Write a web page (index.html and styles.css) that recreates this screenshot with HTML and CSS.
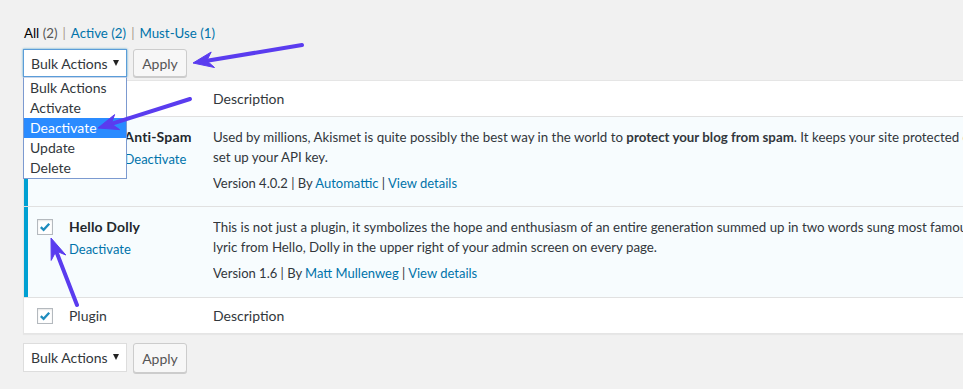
FILE: index.html
```html
<!DOCTYPE html>
<html lang="en">
<head>
<meta charset="utf-8">
<title>Plugins</title>
<link rel="stylesheet" href="styles.css">
</head>
<body>
<div class="page">
  <ul class="subsubsub">
    <li class="current">All <span class="count">(2)</span></li>
    <li class="sep">|</li>
    <li><a href="#">Active <span class="count">(2)</span></a></li>
    <li class="sep">|</li>
    <li><a href="#">Must-Use <span class="count">(1)</span></a></li>
  </ul>

  <div class="tablenav top">
    <div class="select-wrap">
      <div class="select focused"><span>Bulk Actions</span><i class="caret"></i></div>
      <ul class="dropdown">
        <li>Bulk Actions</li>
        <li>Activate</li>
        <li class="hl">Deactivate</li>
        <li>Update</li>
        <li>Delete</li>
      </ul>
    </div>
    <div class="button">Apply</div>
  </div>

  <div class="plugins">
    <div class="row head">
      <div class="cell check"><span class="cb"></span></div>
      <div class="cell name">Plugin</div>
      <div class="cell desc">Description</div>
    </div>

    <div class="row item active">
      <div class="cell check"><span class="cb on"><svg viewBox="0 0 16 16"><path d="M3.2 8.2 L6.4 11.3 L12.8 4.3"/></svg></span></div>
      <div class="cell name">
        <strong class="title">Akismet Anti-Spam</strong>
        <div class="actions"><a href="#">Settings</a> | <a href="#">Deactivate</a></div>
      </div>
      <div class="cell desc">
        <p class="text">Used by millions, Akismet is quite possibly the best way in the world to <strong>protect your blog from spam</strong>. It keeps your site protected even while you sleep. To get started: activate the Akismet plugin and then go to your Akismet Settings page to<br>set up your API key.</p>
        <p class="meta">Version 4.0.2 | By <a href="#">Automattic</a> | <a href="#">View details</a></p>
      </div>
    </div>

    <div class="row item active second">
      <div class="cell check"><span class="cb on"><svg viewBox="0 0 16 16"><path d="M3.2 8.2 L6.4 11.3 L12.8 4.3"/></svg></span></div>
      <div class="cell name">
        <strong class="title">Hello Dolly</strong>
        <div class="actions"><a href="#">Deactivate</a></div>
      </div>
      <div class="cell desc">
        <p class="text">This is not just a plugin, it symbolizes the hope and enthusiasm of an entire generation summed up in two words sung most famously by Louis Armstrong: Hello, Dolly. When activated you will randomly see a<br>lyric from Hello, Dolly in the upper right of your admin screen on every page.</p>
        <p class="meta">Version 1.6 | By <a href="#">Matt Mullenweg</a> | <a href="#">View details</a></p>
      </div>
    </div>

    <div class="row foot">
      <div class="cell check"><span class="cb on"><svg viewBox="0 0 16 16"><path d="M3.2 8.2 L6.4 11.3 L12.8 4.3"/></svg></span></div>
      <div class="cell name">Plugin</div>
      <div class="cell desc">Description</div>
    </div>
  </div>

  <div class="tablenav bottom">
    <div class="select-wrap">
      <div class="select"><span>Bulk Actions</span><i class="caret"></i></div>
    </div>
    <div class="button">Apply</div>
  </div>

  <svg class="arrows" viewBox="0 0 963 389" width="963" height="389">
    <g class="arrow">
      <line x1="302" y1="45" x2="207" y2="60.7"/>
      <polygon points="193,63 214.5,67.5 206.8,60.7 211.2,52"/>
    </g>
    <g class="arrow">
      <line x1="190" y1="99" x2="111.3" y2="123.8"/>
      <polygon points="98,128 119.6,129.6 111.3,123.8 114.6,114.6"/>
    </g>
    <g class="arrow">
      <line x1="77" y1="305" x2="56.1" y2="251"/>
      <polygon points="51,238 65.8,255 56.1,251 51.2,260.4"/>
    </g>
  </svg>
</div>
</body>
</html>
```

FILE: styles.css
```css
html, body {
  margin: 0;
  padding: 0;
  background: #f1f1f1;
  overflow: hidden;
}
body {
  font-family: Lato, "Open Sans", sans-serif;
  font-size: 13px;
  color: #32373c;
  width: 963px;
  height: 389px;
}
a { color: #0073aa; text-decoration: none; }

.page {
  position: relative;
  width: 963px;
  height: 389px;
  padding: 23px 0 0 23px;
  box-sizing: border-box;
}

/* status links */
.subsubsub {
  list-style: none;
  margin: 0;
  padding: 0 0 0 1px;
  display: flex;
  gap: 5px;
  height: 20px;
  line-height: 20px;
  font-size: 13.3px;
  color: #555;
}
.subsubsub .current { color: #000; }
.subsubsub .current .count { color: #555; }
.subsubsub a .count { color: #0073aa; }
.subsubsub .sep { color: #a89a8c; }

/* tablenav */
.tablenav {
  display: flex;
  gap: 6px;
  height: 28px;
}
.tablenav.top { margin-top: 6px; margin-bottom: 3px; }
.tablenav.bottom { margin-top: 9px; }

.select-wrap { position: relative; width: 104px; }
.select {
  box-sizing: border-box;
  width: 104px;
  height: 28px;
  background: #fff;
  border: 1px solid #ddd;
  display: flex;
  align-items: center;
  justify-content: space-between;
  padding: 0 7px 0 7px;
  font-size: 14px;
  color: #32373c;
}
.tablenav.bottom .select { height: 29px; }
.select.focused {
  border-color: #5b9dd9;
  box-shadow: 0 0 2px rgba(30, 140, 190, .8);
}
.caret {
  width: 0;
  height: 0;
  border-left: 3.5px solid transparent;
  border-right: 3.5px solid transparent;
  border-top: 6px solid #222;
  margin-top: -1px;
}

.dropdown {
  position: absolute;
  top: 28px;
  left: 0;
  z-index: 5;
  box-sizing: border-box;
  width: 104px;
  margin: 0;
  padding: 0;
  list-style: none;
  background: #fff;
  border: 1px solid #7c9ad0;
  border-top: 1px solid #c9d6ea;
  font-size: 14px;
  color: #32373c;
}
.dropdown li {
  height: 20px;
  line-height: 20px;
  padding-left: 6px;
}
.dropdown li.hl {
  background: #2a8bff;
  color: #fff;
}

.button {
  box-sizing: border-box;
  width: 54px;
  height: 28px;
  background: #f7f7f7;
  border: 1px solid #ccc;
  border-radius: 3px;
  box-shadow: 0 1px 0 #ccc;
  color: #555;
  font-size: 14px;
  display: flex;
  align-items: center;
  justify-content: center;
}
.tablenav.bottom .button { height: 30px; }

/* plugins table */
.plugins {
  width: 1000px;
  background: #fff;
  border: 1px solid #e5e5e5;
  box-shadow: 0 1px 1px rgba(0, 0, 0, .04);
}
.row {
  display: grid;
  grid-template-columns: 45px 144px 1fr;
}
.row.head, .row.foot {
  height: 35px;
  align-items: center;
  font-size: 14px;
  color: #32373c;
}
.row.head { border-bottom: 1px solid #e1e1e1; }
.row.foot { border-top: 1px solid #e1e1e1; }
.row.head .cell, .row.foot .cell { display: flex; align-items: center; }

.row.item {
  background: #f7fcfe;
  border-bottom: 1px solid #e1e1e1;
}
.row.item.second { border-bottom: none; }
.row.item .cell { padding: 10px 0 13px; }
.row.item.second .cell { padding-bottom: 14px; }

.cell.check { padding-left: 13px; box-sizing: border-box; }
.row.item .cell.check {
  border-left: 4px solid #00a0d2;
  padding-left: 9px;
  padding-top: 12px;
}
.row.item .cell.desc { white-space: nowrap; overflow: hidden; }

.cb {
  display: block;
  box-sizing: border-box;
  width: 16px;
  height: 16px;
  background: #fff;
  border: 1px solid #b4b9be;
  box-shadow: inset 0 1px 2px rgba(0, 0, 0, .1);
}
.cb svg { display: block; width: 14px; height: 14px; }
.cb svg path {
  fill: none;
  stroke: #1e8cbe;
  stroke-width: 2.6;
  stroke-linecap: butt;
  stroke-linejoin: miter;
}

.title {
  display: block;
  font-size: 14px;
  font-weight: 700;
  letter-spacing: 0.15px;
  color: #23282d;
  line-height: 20px;
}
.actions {
  margin-top: 2px;
  line-height: 20px;
  color: #555;
}
.text {
  margin: 0;
  line-height: 20px;
  font-size: 13.3px;
}
.text strong { font-weight: 700; }
.meta {
  margin: 6px 0 0;
  line-height: 20px;
}

/* annotation arrows */
.arrows {
  position: absolute;
  top: 0;
  left: 0;
  z-index: 10;
  pointer-events: none;
}
.arrow line {
  stroke: #5a3cef;
  stroke-width: 4;
  stroke-linecap: round;
}
.arrow polygon {
  fill: #5a3cef;
  stroke: #5a3cef;
  stroke-width: 1;
  stroke-linejoin: round;
}
```
